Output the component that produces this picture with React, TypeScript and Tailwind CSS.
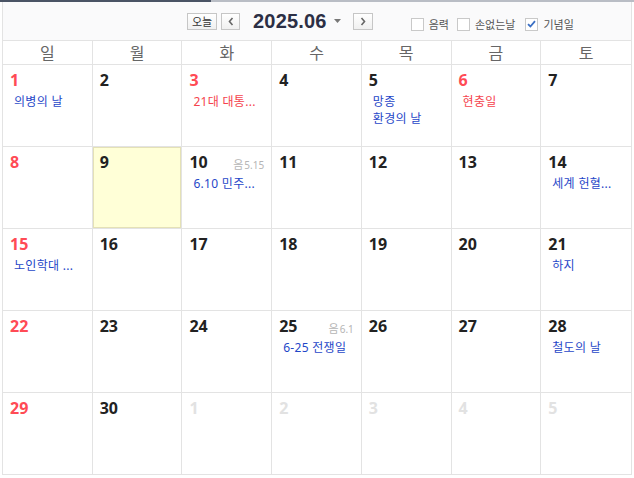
import React from "react";

type Ev = { t: string; red?: boolean };
type Cell = { d: number; red?: boolean; other?: boolean; today?: boolean; lunar?: string; ev?: Ev[] };

const rows: Cell[][] = [
  [
    { d: 1, red: true, ev: [{ t: "의병의 날" }] },
    { d: 2 },
    { d: 3, red: true, ev: [{ t: "21대 대통...", red: true }] },
    { d: 4 },
    { d: 5, ev: [{ t: "망종" }, { t: "환경의 날" }] },
    { d: 6, red: true, ev: [{ t: "현충일", red: true }] },
    { d: 7 },
  ],
  [
    { d: 8, red: true },
    { d: 9, today: true },
    { d: 10, lunar: "5.15", ev: [{ t: "6.10 민주..." }] },
    { d: 11 },
    { d: 12 },
    { d: 13 },
    { d: 14, ev: [{ t: "세계 헌혈..." }] },
  ],
  [
    { d: 15, red: true, ev: [{ t: "노인학대 ..." }] },
    { d: 16 },
    { d: 17 },
    { d: 18 },
    { d: 19 },
    { d: 20 },
    { d: 21, ev: [{ t: "하지" }] },
  ],
  [
    { d: 22, red: true },
    { d: 23 },
    { d: 24 },
    { d: 25, lunar: "6.1", ev: [{ t: "6-25 전쟁일" }] },
    { d: 26 },
    { d: 27 },
    { d: 28, ev: [{ t: "철도의 날" }] },
  ],
  [
    { d: 29, red: true },
    { d: 30 },
    { d: 1, other: true },
    { d: 2, other: true },
    { d: 3, other: true },
    { d: 4, other: true },
    { d: 5, other: true },
  ],
];

const days = ["일", "월", "화", "수", "목", "금", "토"];

const kr = { fontFamily: '"Noto Sans", "Noto Sans CJK KR", sans-serif' };

function Check({ checked, label }: { checked?: boolean; label: string }) {
  return (
    <div className="flex items-center">
      <div className="w-[13px] h-[13px] border border-[#c9c9c9] bg-white flex items-center justify-center">
        {checked && (
          <svg width="9" height="8" viewBox="0 0 9 8">
            <path d="M1 4.2 L3.4 6.5 L8 1.2" stroke="#3b6fc4" strokeWidth="1.8" fill="none" />
          </svg>
        )}
      </div>
      <span className="ml-[5px] text-[11px] leading-none text-[#555]">{label}</span>
    </div>
  );
}

function Btn({ children, w }: { children: React.ReactNode; w: string }) {
  return (
    <div
      className={`${w} h-[17px] border border-[#c6c6c6] bg-gradient-to-b from-white to-[#f0f0f0] flex items-center justify-center text-[11px] leading-none text-[#333]`}
    >
      {children}
    </div>
  );
}

export default function App() {
  return (
    <div className="w-[634px] h-[478px] bg-white overflow-hidden" style={kr}>
      <div className="flex h-[2px]">
        <div className="w-[211px] bg-[#4a5465]" />
        <div className="flex-1 bg-[#b9bdc5]" />
      </div>
      <div className="ml-[2px] w-[630px] border-l border-r border-[#e3e3e3]">
        <div className="h-[38px] bg-[#fafafb] flex items-center pl-[184px]">
          <Btn w="w-[30px]">오늘</Btn>
          <div className="ml-[4px]">
            <Btn w="w-[19px]">
              <svg width="6" height="9" viewBox="0 0 6 9">
                <path d="M4.5 1 L1.5 4.5 L4.5 8" stroke="#666" strokeWidth="1.6" fill="none" />
              </svg>
            </Btn>
          </div>
          <span
            className="ml-[13px] text-[20px] font-bold text-[#2c2f45] leading-none tracking-[0.2px]"
            style={{ fontFamily: '"Liberation Sans", Arial, sans-serif' }}
          >
            2025.06
          </span>
          <svg className="ml-[7px]" width="7" height="4" viewBox="0 0 7 4">
            <path d="M0 0 L7 0 L3.5 4 Z" fill="#777" />
          </svg>
          <div className="ml-[12px]">
            <Btn w="w-[20px]">
              <svg width="6" height="9" viewBox="0 0 6 9">
                <path d="M1.5 1 L4.5 4.5 L1.5 8" stroke="#666" strokeWidth="1.6" fill="none" />
              </svg>
            </Btn>
          </div>
          <div className="ml-[38px] mt-[6px] flex items-center gap-[8px]">
            <Check label="음력" />
            <Check label="손없는날" />
            <div className="ml-[2px]">
              <Check checked label="기념일" />
            </div>
          </div>
        </div>
        <div className="grid grid-cols-7 border-t border-b border-[#e3e3e3] h-[25px]">
          {days.map((d, i) => (
            <div
              key={d}
              className={`flex items-center justify-center text-[16px] text-[#666] ${i < 6 ? "border-r border-[#e3e3e3]" : ""}`}
            >
              {d}
            </div>
          ))}
        </div>
        {rows.map((r, ri) => (
          <div key={ri} className="grid grid-cols-7 border-b border-[#e3e3e3] h-[82px]">
            {r.map((c, ci) => (
              <div
                key={ci}
                className={`pt-[5px] ${ci < 6 ? "border-r border-[#e3e3e3]" : ""} ${
                  c.today ? "bg-[#ffffd7] shadow-[inset_0_0_0_1px_#e4e1b6]" : ""
                }`}
              >
                <div className="flex items-center justify-between pl-[7px] pr-[7px] h-[20px]">
                  <span
                    className={`text-[16px] font-bold leading-none ${
                      c.other ? "text-[#e2e2e2]" : c.red ? "text-[#ff4b55]" : "text-[#222]"
                    }`}
                  >
                    {c.d}
                  </span>
                  {c.lunar && (
                    <span className="text-[#b5b5b5] leading-none mt-[2px]">
                      <span className="text-[11px]">음</span>
                      <span className="text-[10px] ml-[1px]">{c.lunar}</span>
                    </span>
                  )}
                </div>
                {c.ev && (
                  <div className="pl-[11px] mt-[3px]">
                    {c.ev.map((e, ei) => (
                      <div
                        key={ei}
                        className={`text-[12px] leading-[17px] tracking-[0.3px] whitespace-nowrap ${
                          e.red ? "text-[#f5434d]" : "text-[#1f47c8]"
                        }`}
                      >
                        {e.t}
                      </div>
                    ))}
                  </div>
                )}
              </div>
            ))}
          </div>
        ))}
      </div>
    </div>
  );
}
